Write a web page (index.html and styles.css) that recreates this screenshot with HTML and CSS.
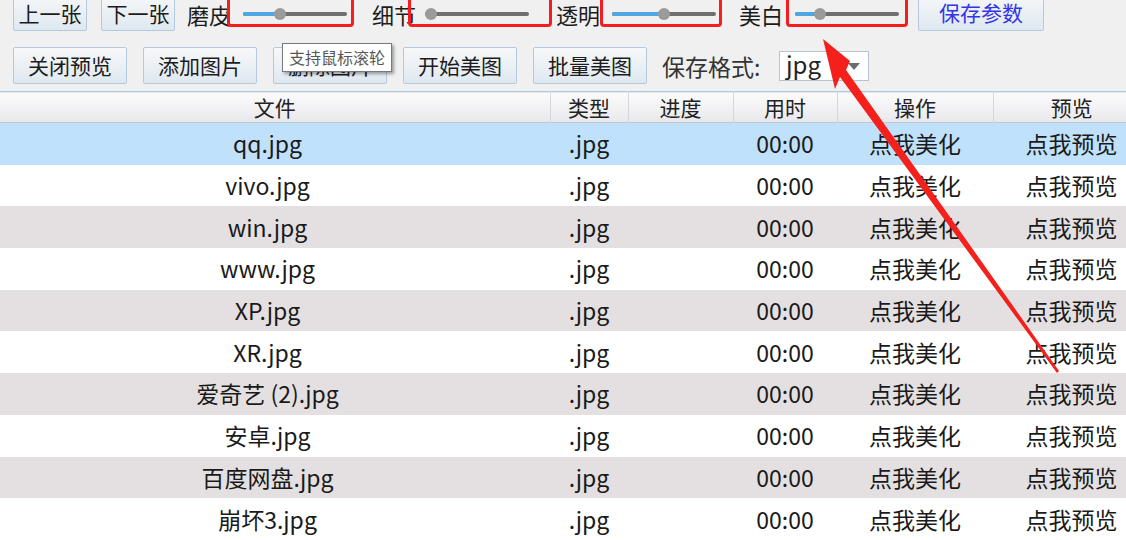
FILE: index.html
```html
<!DOCTYPE html>
<html lang="zh-CN">
<head>
  <meta charset="UTF-8" />
  <title>批量美图</title>
  <link rel="stylesheet" href="styles.css">
</head>
<body>
  <div class="toolbar row-one">
    <button class="btn btn-nav"><span class="tip-mark orange"></span>上一张</button>
    <button class="btn btn-nav next"><span class="tip-mark green"></span>下一张</button>
    <div class="param p1">
      <span class="param-label">磨皮</span>
      <div class="slider"><div class="fill" style="width:36%"></div><div class="knob" style="left:36%"></div></div>
    </div>
    <div class="param p2">
      <span class="param-label">细节</span>
      <div class="slider"><div class="fill" style="width:0%"></div><div class="knob" style="left:0%"></div></div>
    </div>
    <div class="param p3">
      <span class="param-label">透明</span>
      <div class="slider"><div class="fill" style="width:50%"></div><div class="knob" style="left:50%"></div></div>
    </div>
    <div class="param p4">
      <span class="param-label">美白</span>
      <div class="slider"><div class="fill" style="width:24%"></div><div class="knob" style="left:24%"></div></div>
    </div>
    <button class="btn btn-save">保存参数</button>
  </div>

  <div class="toolbar row-two">
    <button class="btn btn-op">关闭预览</button>
    <button class="btn btn-op">添加图片</button>
    <button class="btn btn-op">删除图片</button>
    <button class="btn btn-op">开始美图</button>
    <button class="btn btn-op">批量美图</button>
    <span class="format-label">保存格式:</span>
    <div class="combo"><span class="combo-value">jpg</span><span class="combo-arrow"></span></div>
  </div>

  <div class="grid-wrap">
    <table class="grid">
      <colgroup>
        <col class="c-file"><col class="c-type"><col class="c-prog"><col class="c-time"><col class="c-op"><col class="c-view">
      </colgroup>
      <thead>
        <tr><th>文件</th><th>类型</th><th>进度</th><th>用时</th><th>操作</th><th>预览</th></tr>
      </thead>
      <tbody>
        <tr class="selected"><td class="name">qq.jpg</td><td>.jpg</td><td></td><td>00:00</td><td>点我美化</td><td>点我预览</td></tr>
        <tr><td class="name">vivo.jpg</td><td>.jpg</td><td></td><td>00:00</td><td>点我美化</td><td>点我预览</td></tr>
        <tr class="alt"><td class="name">win.jpg</td><td>.jpg</td><td></td><td>00:00</td><td>点我美化</td><td>点我预览</td></tr>
        <tr><td class="name">www.jpg</td><td>.jpg</td><td></td><td>00:00</td><td>点我美化</td><td>点我预览</td></tr>
        <tr class="alt"><td class="name">XP.jpg</td><td>.jpg</td><td></td><td>00:00</td><td>点我美化</td><td>点我预览</td></tr>
        <tr><td class="name">XR.jpg</td><td>.jpg</td><td></td><td>00:00</td><td>点我美化</td><td>点我预览</td></tr>
        <tr class="alt"><td class="name">爱奇艺 (2).jpg</td><td>.jpg</td><td></td><td>00:00</td><td>点我美化</td><td>点我预览</td></tr>
        <tr><td class="name">安卓.jpg</td><td>.jpg</td><td></td><td>00:00</td><td>点我美化</td><td>点我预览</td></tr>
        <tr class="alt"><td class="name">百度网盘.jpg</td><td>.jpg</td><td></td><td>00:00</td><td>点我美化</td><td>点我预览</td></tr>
        <tr><td class="name">崩坏3.jpg</td><td>.jpg</td><td></td><td>00:00</td><td>点我美化</td><td>点我预览</td></tr>
      </tbody>
    </table>
  </div>

  <!-- 标注：红框、提示、箭头 -->
  <div class="hint-box b1"></div>
  <div class="hint-box b2"></div>
  <div class="hint-box b3"></div>
  <div class="hint-box b4"></div>
  <div class="tooltip">支持鼠标滚轮</div>
  <svg class="arrow" width="1126" height="540" viewBox="0 0 1126 540">
    <polygon points="823,39 850,61 846,70 1059,371 1057,373 840,77 835,89" fill="#f4201c" />
  </svg>
</body>
</html>
```

FILE: styles.css
```css
html, body {
  margin: 0;
  padding: 0;
  width: 1126px;
  height: 540px;
  overflow: hidden;
  background-color: #f0f0f0;
  color: #1c1c1c;
  font-family: "Noto Sans CJK SC", "Noto Sans", sans-serif;
}

.toolbar {
  display: flex;
  align-items: center;
}

.row-one {
  height: 31px;
}

.row-two {
  height: 37px;
  margin-top: 16px;
}

.btn {
  box-sizing: border-box;
  border: 1px solid #b3c9dd;
  background: linear-gradient(#f7f8fa, #dfe8f0);
  color: #1c1c1c;
  font-family: "Noto Sans CJK SC", sans-serif;
  font-size: 21px;
  line-height: 1;
  padding: 0;
  border-radius: 2px;
  position: relative;
}

.btn-nav {
  width: 74px;
  height: 39px;
  align-self: flex-end;
  padding-top: 4px;
  margin-left: 13px;
}
.btn-nav.next { margin-left: 14px; }

.tip-mark {
  position: absolute;
  top: 0;
  left: 12px;
  width: 7px;
  height: 2px;
  border-radius: 0 0 2px 2px;
}
.tip-mark.orange { background-color: #f5a65a; }
.tip-mark.green { background-color: #8fd26a; left: 31px; }

.param {
  display: flex;
  align-items: center;
  gap: 12px;
}
.p1 { margin-left: 12px; }
.p2 { margin-left: 25px; gap: 9px; }
.p3 { margin-left: 27px; }
.p4 { margin-left: 23px; }

.param-label {
  font-size: 22px;
  line-height: 1;
  margin-bottom: 4px;
  color: #1c1c1c;
}

.slider {
  position: relative;
  width: 104px;
  height: 4px;
  margin-bottom: 4px;
  background-color: #6f6f6f;
  border-radius: 2px;
}
.slider .fill {
  height: 100%;
  background-color: #4ea6e3;
  border-radius: 2px 0 0 2px;
}
.slider .knob {
  position: absolute;
  top: 50%;
  width: 12px;
  height: 12px;
  margin: -6px 0 0 -6px;
  border-radius: 50%;
  background-color: #9a9a9a;
}
.p2 .slider .knob { margin-left: 0; }

.btn-save {
  width: 126px;
  height: 39px;
  align-self: flex-end;
  padding-top: 2px;
  margin-left: 19px;
  color: #3535e8;
}

.btn-op {
  width: 114px;
  height: 37px;
  margin-left: 16px;
}
.btn-op:first-child { margin-left: 13px; }

.format-label {
  width: 103px;
  font-size: 23px;
  margin-left: 15px;
  color: #333;
}

.combo {
  box-sizing: border-box;
  width: 90px;
  height: 30px;
  margin-left: 14px;
  background-color: #fff;
  border: 1px solid #b6c4d2;
  display: flex;
  align-items: center;
  justify-content: space-between;
  padding: 0 8px 0 6px;
}
.combo-value {
  font-size: 24px;
  line-height: 1;
  margin-top: -4px;
  color: #222;
}
.combo-arrow {
  width: 0;
  height: 0;
  margin-top: 2px;
  border-left: 6px solid transparent;
  border-right: 6px solid transparent;
  border-top: 7px solid #6c6c6c;
}

.grid-wrap {
  margin-top: 7px;
  width: 1126px;
  overflow: hidden;
}

.grid {
  width: 1150px;
  border-collapse: collapse;
  table-layout: fixed;
}
.c-file { width: 550px; }
.c-type { width: 78px; }
.c-prog { width: 105px; }
.c-time { width: 104px; }
.c-op { width: 156px; }
.c-view { width: 157px; }

.grid thead tr {
  background: linear-gradient(#fbfbfc, #e9e9ed);
  border-top: 1px solid #a9c8e3;
  border-bottom: 1px solid #c6c6ca;
}
.grid th {
  height: 30px;
  padding: 0;
  font-weight: normal;
  font-size: 21px;
  line-height: 30px;
  color: #222;
  border-left: 1px solid #d3d8de;
}
.grid th:first-child { border-left: none; }

.grid td {
  height: 41.7px;
  padding: 0;
  text-align: center;
  font-size: 23px;
  line-height: 41px;
  color: #1a1a1a;
  white-space: nowrap;
}
.grid td.name { padding-right: 15px; }

.grid tbody tr { background-color: #ffffff; }
.grid tbody tr.alt { background-color: #e4e0e1; }
.grid tbody tr.selected { background-color: #c0e1fc; }

/* 标注层 */
.hint-box {
  position: absolute;
  top: -6px;
  height: 33px;
  box-sizing: border-box;
  border: 3px solid #f51d1d;
  border-radius: 4px;
}
.b1 { left: 227px; width: 127px; }
.b2 { left: 408px; width: 144px; }
.b3 { left: 600px; width: 122px; }
.b4 { left: 786px; width: 122px; }

.tooltip {
  position: absolute;
  left: 282px;
  top: 43px;
  width: 110px;
  height: 29px;
  box-sizing: border-box;
  background-color: #fff;
  border: 1px solid #7a7a7a;
  box-shadow: 2px 2px 3px rgba(0, 0, 0, 0.35);
  font-size: 16px;
  line-height: 27px;
  text-align: center;
  color: #575757;
}

.arrow {
  position: absolute;
  left: 0;
  top: 0;
  pointer-events: none;
}
```
